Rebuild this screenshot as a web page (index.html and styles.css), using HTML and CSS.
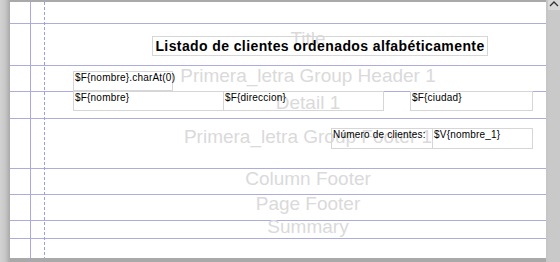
FILE: index.html
```html
<!DOCTYPE html>
<html lang="es">
<head>
  <meta charset="UTF-8">
  <meta name="viewport" content="width=device-width, initial-scale=1.0">
  <title>Listado de clientes - Diseño</title>
  <link rel="stylesheet" href="styles.css">
</head>
<body>
  <div class="designer">
    <div class="viewport">
      <div class="page">
        <div class="band band-top"></div>

        <div class="band band-title">
          <span class="band-name">Title</span>
          <div class="field field-title">Listado de clientes ordenados alfabéticamente</div>
        </div>

        <div class="band band-gh">
          <span class="band-name">Primera_letra Group Header 1</span>
          <div class="field field-letra">$F{nombre}.charAt(0)</div>
        </div>

        <div class="band band-detail">
          <span class="band-name">Detail 1</span>
          <div class="field field-nombre">$F{nombre}</div>
          <div class="field field-direccion">$F{direccion}</div>
          <div class="field field-ciudad">$F{ciudad}</div>
        </div>

        <div class="band band-gf">
          <span class="band-name">Primera_letra Group Footer 1</span>
          <div class="field field-num-label">Número de clientes:</div>
          <div class="field field-num-value">$V{nombre_1}</div>
        </div>

        <div class="band band-cf">
          <span class="band-name">Column Footer</span>
        </div>

        <div class="band band-pf">
          <span class="band-name">Page Footer</span>
        </div>

        <div class="band band-summary">
          <span class="band-name">Summary</span>
        </div>

        <div class="band band-bottom"></div>

        <div class="guide guide-margin"></div>
        <div class="guide guide-column"></div>
      </div>
    </div>

    <div class="vscroll">
      <div class="vscroll-up">
        <svg width="12" height="9" viewBox="0 0 12 9">
          <polyline points="2,6 6,2 10,6" fill="none" stroke="#333" stroke-width="1.3"/>
        </svg>
      </div>
    </div>
  </div>
</body>
</html>
```

FILE: styles.css
```css
* { margin: 0; padding: 0; box-sizing: border-box; }
body { width: 560px; height: 262px; overflow: hidden; background: #c6c6c6; font-family: "Liberation Sans", Arial, sans-serif; }

.designer { display: flex; height: 262px; }
.viewport {
  width: 546px; height: 262px; overflow: hidden;
  padding: 2px 0 0 10px;
  background: linear-gradient(to right, #d2d2d2 0, #c8c8c8 5px, #a9a9a9 10px);
}
.page { position: relative; width: 596px; height: 256px; background: #fff; }

/* bands */
.band { position: relative; border-bottom: 1px solid #acacdf; }
.band-top { height: 22px; }
.band-title { height: 42px; }
.band-gh { height: 26px; }
.band-detail { height: 27px; }
.band-gf { height: 50px; }
.band-cf { height: 26px; }
.band-pf { height: 26px; }
.band-summary { height: 18px; }
.band-bottom { height: 19px; border-bottom: none; }

.band-name {
  position: absolute; left: 0; right: 0;
  text-align: center; white-space: nowrap;
  font-size: 19px; line-height: 19px; color: #dadada;
}
.band-title .band-name { top: 5px; }
.band-gh .band-name { top: 0; }
.band-detail .band-name { top: 1px; }
.band-gf .band-name { top: 8px; }
.band-cf .band-name { top: 0; }
.band-pf .band-name { top: -1px; }
.band-summary .band-name { top: -4px; }

/* guides */
.guide { position: absolute; top: 0; bottom: 0; width: 1px; }
.guide-margin { left: 20px; background: #a9a9df; }
.guide-column { left: 34px; background: repeating-linear-gradient(to bottom, #9d9de6 0 3px, transparent 3px 5px); }

/* report elements */
.field {
  position: absolute;
  border: 1px solid #d6d6d6;
  padding: 0 1px;
  font-size: 10px; line-height: 12px; letter-spacing: 0.2px;
  color: #000; white-space: nowrap;
}
.field-title {
  left: 142px; top: 12px; width: 336px; height: 20px;
  font-size: 14px; font-weight: bold; line-height: 18px; letter-spacing: 0.4px;
  text-align: center;
}
.field-letra { left: 63px; top: 5px; width: 100px; height: 20px; }
.field-nombre { left: 63px; top: -1px; width: 151px; height: 20px; line-height: 11px; }
.field-direccion { left: 213px; top: -1px; width: 161px; height: 20px; line-height: 11px; }
.field-ciudad { left: 400px; top: -1px; width: 123px; height: 20px; line-height: 11px; }
.field-num-label { left: 321px; top: 9px; width: 102px; height: 21px; }
.field-num-value { left: 422px; top: 9px; width: 101px; height: 21px; }

/* scrollbar */
.vscroll { margin-left: 2px; width: 12px; background: #c9c9c9; }
.vscroll-up { height: 10px; background: #d9d9d9; }
.vscroll-up svg { display: block; }
```
